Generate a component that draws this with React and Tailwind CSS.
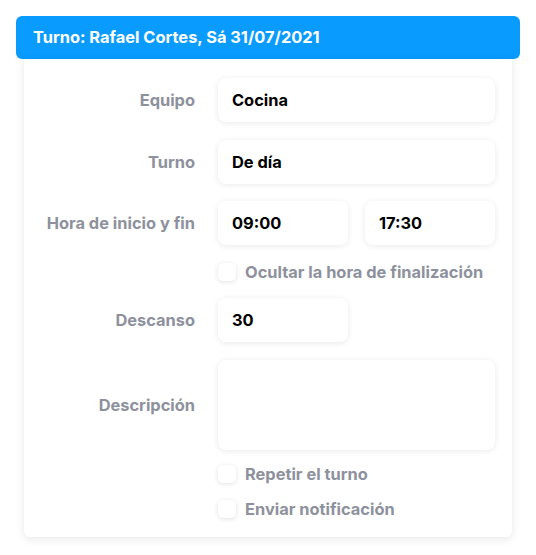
const font = { fontFamily: 'Inter, "Noto Sans", sans-serif' };

function Field({ label, children, className = '' }) {
    return (
        <div className={`flex items-center ${className}`}>
            <div className="w-[172px] pr-[1px] text-right text-[16.4px] font-bold text-[#8d919d]">
                {label}
            </div>
            <div className="ml-[22px] flex gap-[17px]">{children}</div>
        </div>
    );
}

function Input({ value, w = 'w-[277px]', h = 'h-[44px]' }) {
    return (
        <div className={`${w} ${h} flex items-center rounded-[8px] bg-white px-[14px] text-[16.4px] font-bold text-black shadow-[0_1px_6px_rgba(0,0,0,0.09)]`}>
            {value}
        </div>
    );
}

function Check({ label, className = '' }) {
    return (
        <div className={`flex h-[18px] items-center pl-[194px] leading-[18px] ${className}`}>
            <span className="h-[18px] w-[18px] shrink-0 rounded-[5px] bg-white shadow-[0_1px_5px_rgba(0,0,0,0.12)]" />
            <span className="ml-[9px] text-[16.4px] font-bold text-[#8d919d]">{label}</span>
        </div>
    );
}

export default function App() {
    return (
        <div className="min-h-[555px] bg-white px-4 pt-4" style={font}>
            <div className="flex h-[43px] w-[504px] items-center rounded-[6px] bg-[#0a9bff] px-[17px] text-[16.4px] font-bold text-white">
                Turno: Rafael Cortes, Sá 31/07/2021
            </div>
            <div className="mx-2 w-[488px] rounded-b-[6px] bg-white pt-[19px] pb-[19px] shadow-[0_2px_10px_rgba(0,0,0,0.10)]">
                <Field label="Equipo">
                    <Input value="Cocina" />
                </Field>
                <Field label="Turno" className="mt-[18px]">
                    <Input value="De día" />
                </Field>
                <Field label="Hora de inicio y fin" className="mt-[17px]">
                    <Input value="09:00" w="w-[130px]" />
                    <Input value="17:30" w="w-[130px]" />
                </Field>
                <Check label="Ocultar la hora de finalización" className="mt-[18px]" />
                <Field label="Descanso" className="mt-[17px]">
                    <Input value="30" w="w-[130px]" />
                </Field>
                <Field label="Descripción" className="mt-[18px]">
                    <Input value="" h="h-[90px]" />
                </Field>
                <Check label="Repetir el turno" className="mt-[15px]" />
                <Check label="Enviar notificación" className="mt-[17px]" />
            </div>
        </div>
    );
}
